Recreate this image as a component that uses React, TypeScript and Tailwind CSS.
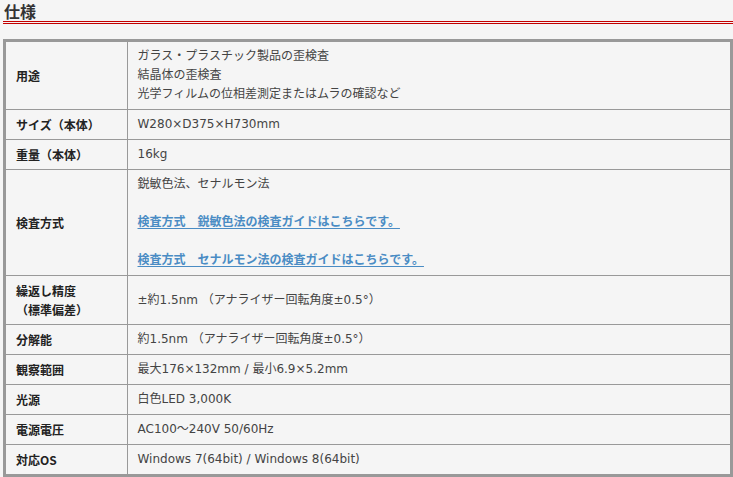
const rows: { label: React.ReactNode; value: React.ReactNode }[] = [
  {
    label: "用途",
    value: (
      <>
        ガラス・プラスチック製品の歪検査
        <br />
        結晶体の歪検査
        <br />
        光学フィルムの位相差測定またはムラの確認など
      </>
    ),
  },
  { label: "サイズ（本体）", value: "W280×D375×H730mm" },
  { label: "重量（本体）", value: "16kg" },
  {
    label: "検査方式",
    value: (
      <>
        鋭敏色法、セナルモン法
        <br />
        <br />
        <a href="#" className="font-bold text-[#4a8cc4] underline underline-offset-2">
          検査方式　鋭敏色法の検査ガイドはこちらです。
        </a>
        <br />
        <br />
        <a href="#" className="font-bold text-[#4a8cc4] underline underline-offset-2">
          検査方式　セナルモン法の検査ガイドはこちらです。
        </a>
      </>
    ),
  },
  {
    label: (
      <>
        繰返し精度
        <br />
        （標準偏差）
      </>
    ),
    value: "±約1.5nm （アナライザー回転角度±0.5°）",
  },
  { label: "分解能", value: "約1.5nm （アナライザー回転角度±0.5°）" },
  { label: "観察範囲", value: "最大176×132mm / 最小6.9×5.2mm" },
  { label: "光源", value: "白色LED 3,000K" },
  { label: "電源電圧", value: "AC100～240V 50/60Hz" },
  { label: "対応OS", value: "Windows 7(64bit) / Windows 8(64bit)" },
];

export default function App() {
  return (
    <div
      className="min-h-[477px] bg-[#f5f5f5] pl-[3px] text-[#333]"
      style={{ fontFamily: '"DejaVu Sans", "Noto Sans CJK JP", sans-serif' }}
    >
      <h2
        className="pl-[1px] pt-[3px] text-[16px] font-bold leading-[17px] text-[#333]"
        style={{ fontFamily: '"Noto Sans CJK JP", sans-serif' }}
      >
        仕様
      </h2>
      <div className="mt-[1px] h-[3px] border-y border-[#c40000]" />
      <div className="mt-[15px] border-[3px] border-[#999]">
        <table className="w-full border-collapse text-[12px] leading-[19px]">
          <tbody>
            {rows.map((r, i) => (
              <tr key={i} className={i < rows.length - 1 ? "border-b border-[#999]" : ""}>
                <th
                  className="w-[121px] border-r border-[#999] py-[5px] pl-[10px] text-left align-middle font-bold text-[#222]"
                  style={{ fontFamily: '"Noto Sans CJK JP", sans-serif' }}
                >
                  {r.label}
                </th>
                <td className="py-[5px] pl-[10px] align-middle text-[#444]">{r.value}</td>
              </tr>
            ))}
          </tbody>
        </table>
      </div>
    </div>
  );
}
